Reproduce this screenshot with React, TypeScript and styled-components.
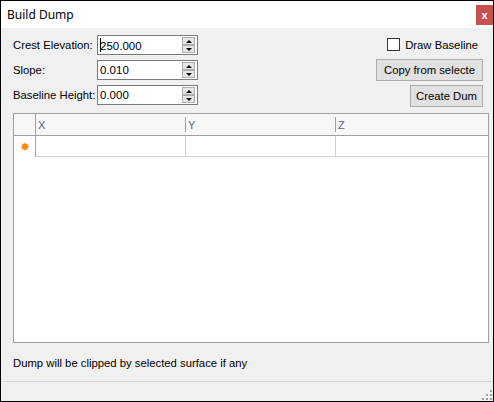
import React from "react";
import styled, { createGlobalStyle } from "styled-components";

const Global = createGlobalStyle`
  html, body { margin: 0; padding: 0; background: #fff; }
  body { font-family: "Liberation Sans", Arial, sans-serif; font-size: 11.3px; color: #000; }
`;

const Window = styled.div`
  width: 494px;
  height: 402px;
  box-sizing: border-box;
  border: 1px solid #000;
  display: flex;
  flex-direction: column;
  background: #f0f0f0;
`;

const TitleBar = styled.div`
  height: 27px;
  background: #fff;
  display: flex;
  align-items: flex-start;
  justify-content: space-between;
`;

const Title = styled.div`
  font-family: "Noto Sans", "Liberation Sans", sans-serif;
  font-size: 12px;
  line-height: 27px;
  padding-left: 6px;
`;

const CloseButton = styled.div`
  margin-top: 4px;
  width: 17px;
  height: 20px;
  background: #c75050;
  color: #fff;
  font-size: 11px;
  font-weight: bold;
  display: flex;
  align-items: center;
  justify-content: center;
`;

const Body = styled.div`
  flex: 1;
  display: flex;
  flex-direction: column;
  padding: 7px 4px 0 11px;
`;

const Top = styled.div`
  display: flex;
  justify-content: space-between;
  align-items: flex-start;
  padding-right: 6px;
`;

const Form = styled.div`
  display: grid;
  grid-template-columns: 85px 101px;
  grid-auto-rows: 20px;
  row-gap: 5px;
  align-items: center;
`;

const Label = styled.label`
  padding-left: 1px;
  white-space: nowrap;
`;

const Spin = styled.div`
  height: 20px;
  box-sizing: border-box;
  border: 1px solid #7a7a7a;
  background: #fff;
  display: flex;
  align-items: center;
  padding: 1px 2px 1px 2px;
`;

const SpinValue = styled.div`
  flex: 1;
  font-size: 11.5px;
`;

const Caret = styled.span`
  display: inline-block;
  width: 1px;
  height: 14px;
  background: #000;
  vertical-align: -2px;
  margin-right: -1px;
`;

const Arrows = styled.div`
  width: 13px;
  height: 16px;
  display: flex;
  flex-direction: column;
`;

const ArrowBox = styled.div<{ $down?: boolean }>`
  flex: 1;
  box-sizing: border-box;
  border: 1px solid #adadad;
  background: #e5e5e5;
  display: flex;
  align-items: center;
  justify-content: center;
  &::after {
    content: "";
    width: 0;
    height: 0;
    border-left: 3px solid transparent;
    border-right: 3px solid transparent;
    ${(p) => (p.$down ? "border-top: 3px solid #000;" : "border-bottom: 3px solid #000;")}
  }
`;

const Right = styled.div`
  display: flex;
  flex-direction: column;
  align-items: flex-end;
`;

const CheckRow = styled.label`
  display: flex;
  align-items: center;
  gap: 5px;
  height: 13px;
  margin-top: 3px;
  padding-right: 5px;
  white-space: nowrap;
`;

const CheckBox = styled.span`
  width: 13px;
  height: 13px;
  box-sizing: border-box;
  border: 1px solid #333;
  background: #fff;
`;

const Button = styled.div<{ $w: number; $gap: number }>`
  width: ${(p) => p.$w}px;
  height: 22px;
  margin-top: ${(p) => p.$gap}px;
  box-sizing: border-box;
  border: 1px solid #adadad;
  background: #e1e1e1;
  display: flex;
  align-items: center;
  justify-content: center;
  white-space: nowrap;
  overflow: hidden;
`;

const Grid = styled.div`
  margin-top: 6px;
  margin-left: 1px;
  height: 230px;
  box-sizing: border-box;
  border: 1px solid #a0a0a0;
  background: #fff;
  display: grid;
  grid-template-columns: 22px 150px 150px 1fr;
  grid-template-rows: 22px 21px;
  align-content: start;
`;

const HeadCell = styled.div<{ $corner?: boolean }>`
  background: #f7f7f7;
  border-bottom: 1px solid #a0a0a0;
  border-right: ${(p) => (p.$corner ? "1px solid #a0a0a0" : "none")};
  display: flex;
  align-items: center;
  padding-left: 2px;
  color: #5a6478;
  font-size: 11px;
  position: relative;
  &::before {
    content: "";
    display: ${(p) => (p.$corner ? "none" : "block")};
    position: absolute;
    left: -1px;
    top: 3px;
    bottom: 3px;
    width: 1px;
    background: #a0a0a0;
  }
`;

const RowHead = styled.div`
  border-right: 1px solid #a0a0a0;
  display: flex;
  align-items: center;
  justify-content: center;
  color: #f7861c;
  font-size: 12px;
  background: #fff;
`;

const Cell = styled.div<{ $last?: boolean }>`
  border-bottom: 1px solid #d0d0d0;
  border-right: ${(p) => (p.$last ? "none" : "1px solid #d0d0d0")};
`;

const Status = styled.div`
  margin-top: 14px;
  padding-left: 1px;
  height: 15px;
`;

const Footer = styled.div`
  margin-top: auto;
  height: 19px;
  border-top: 1px solid #d7d7d7;
  margin-left: -11px;
  margin-right: -4px;
  display: flex;
  justify-content: flex-end;
  align-items: flex-end;
`;

const Grip = styled.svg`
  display: block;
`;

const fields = [
  { label: "Crest Elevation:", value: "250.000", caret: true },
  { label: "Slope:", value: "0.010" },
  { label: "Baseline Height:", value: "0.000" },
];

export default function App() {
  return (
    <>
      <Global />
      <Window>
        <TitleBar>
          <Title>Build Dump</Title>
          <CloseButton>x</CloseButton>
        </TitleBar>
        <Body>
          <Top>
            <Form>
              {fields.map((f) => (
                <React.Fragment key={f.label}>
                  <Label>{f.label}</Label>
                  <Spin>
                    <SpinValue>
                      {f.caret && <Caret />}
                      {f.value}
                    </SpinValue>
                    <Arrows>
                      <ArrowBox />
                      <ArrowBox $down />
                    </Arrows>
                  </Spin>
                </React.Fragment>
              ))}
            </Form>
            <Right>
              <CheckRow>
                <CheckBox />
                Draw Baseline
              </CheckRow>
              <Button $w={107} $gap={8}>Copy from selecte</Button>
              <Button $w={73} $gap={4}>Create Dum</Button>
            </Right>
          </Top>
          <Grid>
            <HeadCell $corner />
            <HeadCell>X</HeadCell>
            <HeadCell>Y</HeadCell>
            <HeadCell>Z</HeadCell>
            <RowHead>✸</RowHead>
            <Cell />
            <Cell />
            <Cell $last />
          </Grid>
          <Status>Dump will be clipped by selected surface if any</Status>
          <Footer>
            <Grip width="12" height="12" viewBox="0 0 12 12">
              <rect x="9" y="1" width="2" height="2" fill="#a0a0a0" />
              <rect x="5" y="5" width="2" height="2" fill="#a0a0a0" />
              <rect x="9" y="5" width="2" height="2" fill="#a0a0a0" />
              <rect x="1" y="9" width="2" height="2" fill="#a0a0a0" />
              <rect x="5" y="9" width="2" height="2" fill="#a0a0a0" />
              <rect x="9" y="9" width="2" height="2" fill="#a0a0a0" />
            </Grip>
          </Footer>
        </Body>
      </Window>
    </>
  );
}
